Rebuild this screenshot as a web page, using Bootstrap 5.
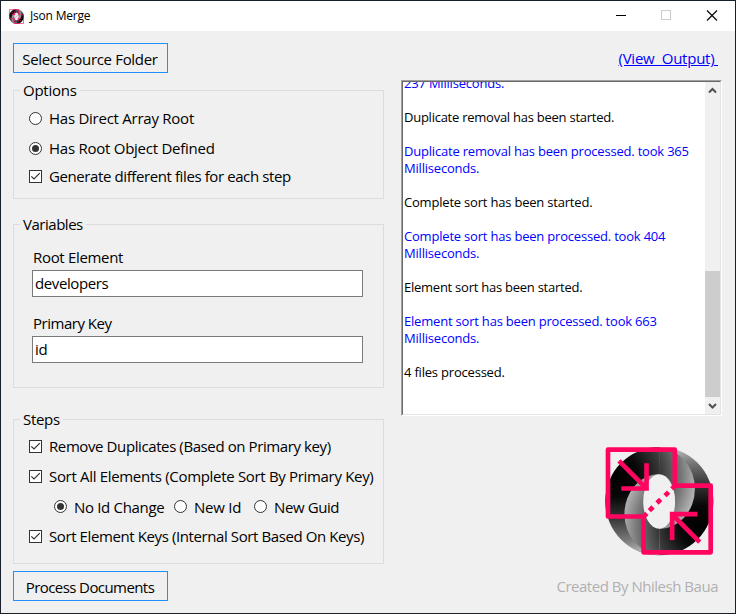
<!DOCTYPE html>
<html lang="en">
<head>
<meta charset="utf-8">
<title>Json Merge</title>
<link href="https://cdn.jsdelivr.net/npm/bootstrap@5.3.0/dist/css/bootstrap.min.css" rel="stylesheet">
<style>
body{font-family:"Open Sans","Noto Sans",sans-serif;font-size:15px;line-height:22px;color:#000;background:#f0f0f0}
.win{width:736px;height:614px;border:1px solid #18202c;background:#f0f0f0;overflow:hidden;white-space:nowrap}
.titlebar{height:30px;padding-left:8px;font-size:12px;line-height:30px}
.titlebar .caption{width:46px;height:30px}
.titlebar .apptitle{margin-left:6px;letter-spacing:-.2px}
.client{padding:12px 13px 0 12px;height:582px}
.left-col{width:371px}
.right-col{width:321px}
.client .win-btn{width:155px;height:30px;border:1px solid #1e90ff;background:#f0f0f0;color:#000;border-radius:0;font-size:15px;line-height:20px;padding:2px 1px 1px 0}
.client .btn-source{margin-bottom:7px}
.group{border:1px solid #dcdcdc}
.group legend{font-size:15px;line-height:21px;margin:0 0 0 6px;padding:0 3px}
.g-options{height:119px;margin-bottom:15px}
.g-vars{height:174px;margin-bottom:21px}
.g-steps{height:155px;margin-bottom:7px}
.opt{height:22px;gap:7px;margin-left:15px}
.opt svg{flex:none;width:13px;height:13px}
.o1{margin-top:6px}.o2{margin-top:8px}.o3{margin-top:6px}
.g-vars label{margin:11px 0 2px 19px}
.g-vars .lab2{margin-top:15px}
.win-input{width:331px;height:27px;margin-left:18px;border:1px solid #7a7a7a;border-radius:0;background:#fff;color:#000;font-size:15px;line-height:22px;padding:1px 2px 2px}
.steps{gap:8px;padding-top:5px}
.radios{padding-left:40px}
.radios .opt{margin-left:0}
.radios .opt span{padding-top:1px}
.r1{width:120px}.r2{width:80px}
.out-link{color:#00f;line-height:20px;white-space:pre;margin:5px 4px 12px 0}
.logbox{width:321px;height:336px;border:1px solid;border-color:#a0a0a0 #fff #fff #a0a0a0}
.loginner{border:1px solid;border-color:#696969 #e3e3e3 #e3e3e3 #696969}
.logtext{font-size:13px;line-height:17px;padding-left:1px;overflow:hidden}
.logtext p{margin:0 0 17px}
.logtext p:first-child{margin-top:-7px}
.msg{color:#00f}
.sbar{width:15px;background:#f0f0f0}
.thumb{height:126px;background:#cdcdcd;margin-top:172px}
.biglogo{margin:31px 8px 19px 0}
.credit{color:#b0b0b0;margin-right:4px}
.s1{letter-spacing:-.25px}
.s2{letter-spacing:-.32px}
.s4{letter-spacing:-.4px}
.s5{letter-spacing:-.48px}
.s6{letter-spacing:-.58px}
.s3{letter-spacing:-.2px}
.s3b{letter-spacing:-.25px}
</style>
<script src="https://cdn.jsdelivr.net/npm/bootstrap@5.3.0/dist/js/bootstrap.bundle.min.js"></script>
</head>
<body>
<svg width="0" height="0" class="position-absolute">
<defs>
<symbol id="ron" viewBox="0 0 13 13"><circle cx="6.5" cy="6.5" r="6" fill="#fff" stroke="#333"/><circle cx="6.5" cy="6.5" r="3.5" fill="#333"/></symbol>
<symbol id="roff" viewBox="0 0 13 13"><circle cx="6.5" cy="6.5" r="6" fill="#fff" stroke="#333"/></symbol>
<symbol id="chk" viewBox="0 0 13 13"><rect x=".5" y=".5" width="12" height="12" fill="#fff" stroke="#333"/><path d="M2.3 6.3L5 9L10.8 3.2" fill="none" stroke="#333" stroke-width="1.2"/></symbol>
<radialGradient id="ga" gradientUnits="userSpaceOnUse" cx="80" cy="120" r="260"><stop offset="0" stop-color="#000"/><stop offset=".25" stop-color="#080808"/><stop offset=".5" stop-color="#363636"/><stop offset=".75" stop-color="#777"/><stop offset="1" stop-color="#ccc"/></radialGradient>
<radialGradient id="gb" gradientUnits="userSpaceOnUse" cx="336" cy="276" r="260"><stop offset="0" stop-color="#000"/><stop offset=".25" stop-color="#080808"/><stop offset=".5" stop-color="#363636"/><stop offset=".75" stop-color="#777"/><stop offset="1" stop-color="#ccc"/></radialGradient>
<symbol id="logo" viewBox="45 35 328 328">
<circle cx="208" cy="198" r="163" fill="url(#gb)"/>
<path d="M209 35A163 163 0 0 0 209 361Z" fill="url(#ga)"/>
<path d="M209 116A105 120 0 0 0 209 357Z" fill="url(#gb)"/>
<path d="M208 39A107 121 0 0 1 208 282Z" fill="url(#ga)"/>
<ellipse cx="208" cy="199" rx="48" ry="82" fill="#f0f0f0"/>
<g fill="none" stroke="#ff0560" stroke-width="14">
<path d="M54 43H255V151H363V352H161V244H54Z" stroke-linejoin="round"/>
<path d="M87 77L170 160M94 160H177M170 166V84M330 321L247 238M323 237H240M247 231V315"/>
<path d="M160 246L171 235M178.500 226.500L189.500 215.500M201.500 203.500L212.500 192.500M225.500 181.500L236.500 170.500M246 161L257 150"/>
</g></symbol>
</defs>
</svg>
<div class="win d-flex flex-column">
  <div class="titlebar bg-white d-flex align-items-center flex-shrink-0">
    <svg width="15" height="15"><use href="#logo"/></svg>
    <span class="apptitle me-auto">Json Merge</span>
    <svg class="caption" viewBox="0 0 46 30"><path d="M19 14.500h10" stroke="#000"/></svg>
    <svg class="caption" viewBox="0 0 46 30"><rect x="18.500" y="9.500" width="9" height="9" fill="none" stroke="#ccc"/></svg>
    <svg class="caption" viewBox="0 0 46 30"><path d="M18 9.500l10 10M28 9.500l-10 10" stroke="#000" stroke-width="1.1"/></svg>
  </div>
  <div class="client d-flex justify-content-between">
    <div class="left-col d-flex flex-column align-items-start">
      <button class="btn win-btn btn-source s2">Select Source Folder</button>
      <fieldset class="group g-options w-100">
        <legend class="float-none w-auto s1">Options</legend>
        <div class="opt o1 d-flex align-items-center s1"><svg><use href="#roff"/></svg><span>Has Direct Array Root</span></div>
        <div class="opt o2 d-flex align-items-center s1"><svg><use href="#ron"/></svg><span>Has Root Object Defined</span></div>
        <div class="opt o3 d-flex align-items-center s4"><svg><use href="#chk"/></svg><span>Generate different files for each step</span></div>
      </fieldset>
      <fieldset class="group g-vars w-100">
        <legend class="float-none w-auto s5">Variables</legend>
        <label class="d-block s2" for="root">Root Element</label>
        <input class="win-input d-block s4" id="root" value="developers">
        <label class="d-block lab2 s5" for="key">Primary Key</label>
        <input class="win-input d-block s1" id="key" value="id">
      </fieldset>
      <fieldset class="group g-steps w-100">
        <legend class="float-none w-auto s2">Steps</legend>
        <div class="steps d-flex flex-column">
          <div class="opt d-flex align-items-center s4"><svg><use href="#chk"/></svg><span>Remove Duplicates (Based on Primary key)</span></div>
          <div class="opt d-flex align-items-center s2"><svg><use href="#chk"/></svg><span>Sort All Elements (Complete Sort By Primary Key)</span></div>
          <div class="d-flex radios">
            <div class="opt r1 d-flex align-items-center s2"><svg><use href="#ron"/></svg><span>No Id Change</span></div>
            <div class="opt r2 d-flex align-items-center s1"><svg><use href="#roff"/></svg><span>New Id</span></div>
            <div class="opt d-flex align-items-center s4"><svg><use href="#roff"/></svg><span>New Guid</span></div>
          </div>
          <div class="opt d-flex align-items-center s4"><svg><use href="#chk"/></svg><span>Sort Element Keys (Internal Sort Based On Keys)</span></div>
        </div>
      </fieldset>
      <button class="btn win-btn s6">Process Documents</button>
    </div>
    <div class="right-col d-flex flex-column align-items-end">
      <a class="out-link s1" href="#">(View  Output) </a>
      <div class="logbox">
        <div class="loginner h-100 bg-white d-flex">
          <div class="logtext flex-grow-1 s3">
            <p class="msg">237 Milliseconds.</p>
            <p class="s3b">Duplicate removal has been started.</p>
            <p class="msg">Duplicate removal has been processed. took 365<br>Milliseconds.</p>
            <p>Complete sort has been started.</p>
            <p class="msg">Complete sort has been processed. took 404<br>Milliseconds.</p>
            <p class="s3b">Element sort has been started.</p>
            <p class="msg">Element sort has been processed. took 663<br>Milliseconds.</p>
            <p>4 files processed.</p>
          </div>
          <div class="sbar d-flex flex-column">
            <svg width="15" height="17"><path d="M4 10.500l3.500-3.500l3.500 3.500" fill="none" stroke="#505050" stroke-width="2"/></svg>
            <div class="thumb"></div>
            <svg width="15" height="17"><path d="M4 7l3.500 3.500l3.500-3.500" fill="none" stroke="#505050" stroke-width="2"/></svg>
          </div>
        </div>
      </div>
      <svg class="biglogo" width="109" height="109"><use href="#logo"/></svg>
      <div class="credit s5">Created By Nhilesh Baua</div>
    </div>
  </div>
</div>
</body>
</html>
